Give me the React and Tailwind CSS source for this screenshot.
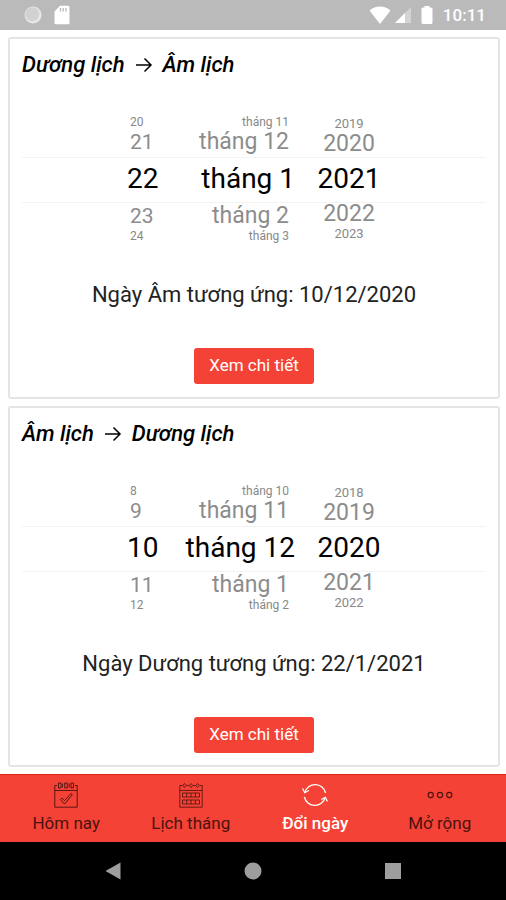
import { useState } from 'react'

const CARDS = [
  {
    id: 'solar',
    from: 'Dương lịch',
    to: 'Âm lịch',
    days: ['20', '21', '22', '23', '24'],
    months: ['tháng 11', 'tháng 12', 'tháng 1', 'tháng 2', 'tháng 3'],
    years: ['2019', '2020', '2021', '2022', '2023'],
    result: 'Ngày Âm tương ứng: 10/12/2020',
  },
  {
    id: 'lunar',
    from: 'Âm lịch',
    to: 'Dương lịch',
    days: ['8', '9', '10', '11', '12'],
    months: ['tháng 10', 'tháng 11', 'tháng 12', 'tháng 1', 'tháng 2'],
    years: ['2018', '2019', '2020', '2021', '2022'],
    result: 'Ngày Dương tương ứng: 22/1/2021',
  },
]

const TABS = [
  { id: 'today', label: 'Hôm nay', Icon: TodayIcon },
  { id: 'month', label: 'Lịch tháng', Icon: MonthIcon },
  { id: 'convert', label: 'Đổi ngày', Icon: ConvertIcon },
  { id: 'more', label: 'Mở rộng', Icon: MoreIcon },
]

function TodayIcon() {
  return (
    <svg viewBox="0 0 24 26" className="h-[26px] w-6" fill="none" stroke="currentColor" strokeWidth=".9">
      <path d="M3 3.5H.8v21.7h22.4V3.5H21M.8 8.5h22.4" />
      <path d="M4.500 1h2.500v5H4.500zM10.700 1h2.600v5h-2.600zM17 1h2.500v5H17zM8.500 1.500v4M15.200 1.500v4" />
      <path d="M6.500 17.500l1.600-1.400 2.400 2.600 6.400-7.200 1.400 1.200-7.800 9.400z" />
    </svg>
  )
}

function MonthIcon() {
  return (
    <svg viewBox="0 0 24 26" className="h-[26px] w-6" fill="none" stroke="currentColor" strokeWidth=".8">
      <path d="M3.500 3.500H.8v21.700h22.400V3.500h-2.700M.8 8.500h22.400M7.500 3.500H10M14 3.500h2.500" />
      <path d="M5.500 1.500l1.700 2-1.700 2-1.700-2zM12 1.500l1.700 2-1.700 2-1.700-2zM18.500 1.500l1.700 2-1.700 2-1.700-2z" />
      <path d="M3.500 11h17v4h-17zM3.500 18h17v4h-17zM7.700 11v4M12 11v4M16.300 11v4M7.700 18v4M12 18v4M16.300 18v4" />
    </svg>
  )
}

function ConvertIcon() {
  return (
    <svg viewBox="0 0 26 26" className="size-[26px]" fill="none" stroke="currentColor" strokeWidth="1.300">
      <path d="M2.800 10.500A10.700 10.700 0 0 1 23.600 11" />
      <path d="M23.200 15.500A10.700 10.700 0 0 1 2.400 15" />
      <path d="M.6 6.500l2.100 4.200 4.100-2.200M25.400 19.500l-2.100-4.200-4.100 2.200" />
    </svg>
  )
}

function MoreIcon() {
  return (
    <svg viewBox="0 0 26 26" className="size-[26px]" fill="none" stroke="currentColor" strokeWidth="1.100">
      <circle cx="3.700" cy="13" r="2.600" />
      <circle cx="13" cy="13" r="2.600" />
      <circle cx="22.300" cy="13" r="2.600" />
    </svg>
  )
}

function StatusBar() {
  return (
    <header className="flex h-[30px] items-center justify-between bg-[#bababa] pr-5 pl-6 text-white">
      <div className="flex items-center gap-3">
        <svg viewBox="0 0 18 18" className="size-[18px]">
          <circle cx="9" cy="9" r="8.500" fill="#e8e8e8" />
          <circle cx="8.300" cy="8.300" r="7" fill="#d2d2d2" />
        </svg>
        <svg viewBox="0 0 16 20" className="h-5 w-4" fill="currentColor">
          <path d="M6 .8h8A1.500 1.500 0 0 1 15.500 2.300v15.400a1.500 1.500 0 0 1-1.500 1.500H2A1.500 1.500 0 0 1 .5 17.700V6.500z" />
          <path d="M6.500 3v3.500M9.200 3v3.500M12 3v3.500" stroke="#bababa" strokeWidth="1.300" />
        </svg>
      </div>
      <div className="flex items-center">
        <svg viewBox="0 0 22 18" className="mr-1 h-[18px] w-[22px]" fill="currentColor">
          <path d="M11 18L.5 4.500C6.500-.8 15.500-.8 21.500 4.500z" />
        </svg>
        <svg viewBox="0 0 16 16" className="mr-[10px] size-4">
          <path d="M16 0v16H0z" fill="#d4d4d4" />
          <path d="M10 6v10H0z" fill="#fff" />
        </svg>
        <svg viewBox="0 0 12 20" className="mr-[10px] h-5 w-3" fill="currentColor">
          <path d="M3.500 1h5v1.500H10a1.500 1.500 0 0 1 1.500 1.500v13.500A1.500 1.500 0 0 1 10 19H2a1.500 1.500 0 0 1-1.500-1.500V4A1.500 1.500 0 0 1 2 2.500h1.500z" />
        </svg>
        <span className="text-[17px] leading-6 font-medium">10:11</span>
      </div>
    </header>
  )
}

const WHEELS = {
  day: {
    label: 'Ngày',
    list: 'w-8 text-left',
    outer: 'h-3 px-[3px] text-[12px] leading-3',
    inner: 'h-7 px-[3px] text-[21px] leading-7',
  },
  month: {
    label: 'Tháng',
    list: 'w-[114px] text-right',
    outer: 'h-3 px-[6px] text-[12px] leading-3',
    inner: 'h-7 px-[6px] text-[23px] leading-7',
  },
  year: {
    label: 'Năm',
    list: 'w-16 text-center',
    outer: 'h-4 text-[13px] leading-4',
    inner: 'h-6 text-[23px] leading-6',
  },
}

function Wheel({ kind, items }) {
  const wheel = WHEELS[kind]
  const tones = [
    `${wheel.outer} text-[#888]`,
    `${wheel.inner} text-[#8c8c8c]`,
    'h-[46px] text-[28px] leading-[46px] text-black',
    `${wheel.inner} text-[#8c8c8c]`,
    `${wheel.outer} text-[#888]`,
  ]
  return (
    <div role="listbox" aria-label={wheel.label} className={`flex flex-col ${wheel.list}`}>
      {items.map((item, i) => (
        <button
          key={item}
          type="button"
          role="option"
          aria-selected={i === 2}
          className={`whitespace-nowrap [text-align:inherit] ${tones[i]}`}
        >
          {item}
        </button>
      ))}
    </div>
  )
}

function ConvertCard({ card }) {
  return (
    <section className="flex flex-1 flex-col rounded-[3px] border-2 border-[#e4e4e4] bg-white px-3 pt-3 pb-3">
      <h2 className="flex items-center gap-[10px] text-[22px] leading-7 font-medium italic">
        <span>{card.from}</span>
        <svg viewBox="0 0 18 16" className="h-4 w-[18px]" fill="none" stroke="currentColor" strokeWidth="1.500">
          <path d="M1 8h15M9.500 1.500L16 8l-6.500 6.500" />
        </svg>
        <span>{card.to}</span>
      </h2>

      <div className="relative mt-[37px] flex justify-center gap-[22px]">
        <div className="pointer-events-none absolute inset-x-0 top-[41px] h-[46px] border-y border-[#f3f3f3]" />
        <Wheel kind="day" items={card.days} />
        <Wheel kind="month" items={card.months} />
        <Wheel kind="year" items={card.years} />
      </div>

      <p className="mt-[39px] text-center text-[22px] leading-7 text-[#222]">{card.result}</p>

      <button
        type="button"
        className="mt-[39px] h-9 w-[120px] self-center rounded-[3px] bg-[#f44336] text-[17px] text-white"
      >
        Xem chi tiết
      </button>
    </section>
  )
}

function TabBar({ active, onChange }) {
  return (
    <nav className="grid h-[68px] grid-cols-4 border-t border-[#dd2415] bg-[#f44336] px-1">
      {TABS.map(({ id, label, Icon }) => (
        <button
          key={id}
          type="button"
          onClick={() => onChange(id)}
          className={`flex flex-col items-center pt-[7px] text-[17px] leading-6 ${
            id === active ? 'font-medium text-white' : 'text-[#4a120e]'
          }`}
        >
          <Icon />
          <span className="mt-[3px]">{label}</span>
        </button>
      ))}
    </nav>
  )
}

function SystemNav() {
  return (
    <footer className="grid h-[58px] grid-cols-3 place-items-center bg-black px-[43px] text-[#9e9e9e]">
      <button type="button" aria-label="Back">
        <svg viewBox="0 0 18 18" className="size-[18px]" fill="currentColor">
          <path d="M16.500 .5v17L1.500 9z" />
        </svg>
      </button>
      <button type="button" aria-label="Home">
        <svg viewBox="0 0 18 18" className="size-[18px]" fill="currentColor">
          <circle cx="9" cy="9" r="8.500" />
        </svg>
      </button>
      <button type="button" aria-label="Recent apps">
        <svg viewBox="0 0 18 18" className="size-[18px]" fill="currentColor">
          <rect x="1" y="1" width="16" height="16" />
        </svg>
      </button>
    </footer>
  )
}

export default function App() {
  const [tab, setTab] = useState('convert')

  return (
    <div className="flex min-h-screen flex-col bg-white font-[Roboto,sans-serif] text-black">
      <StatusBar />
      <main className="flex flex-1 flex-col gap-[7px] py-[7px] pr-[6px] pl-2">
        {CARDS.map(card => (
          <ConvertCard key={card.id} card={card} />
        ))}
      </main>
      <TabBar active={tab} onChange={setTab} />
      <SystemNav />
    </div>
  )
}
